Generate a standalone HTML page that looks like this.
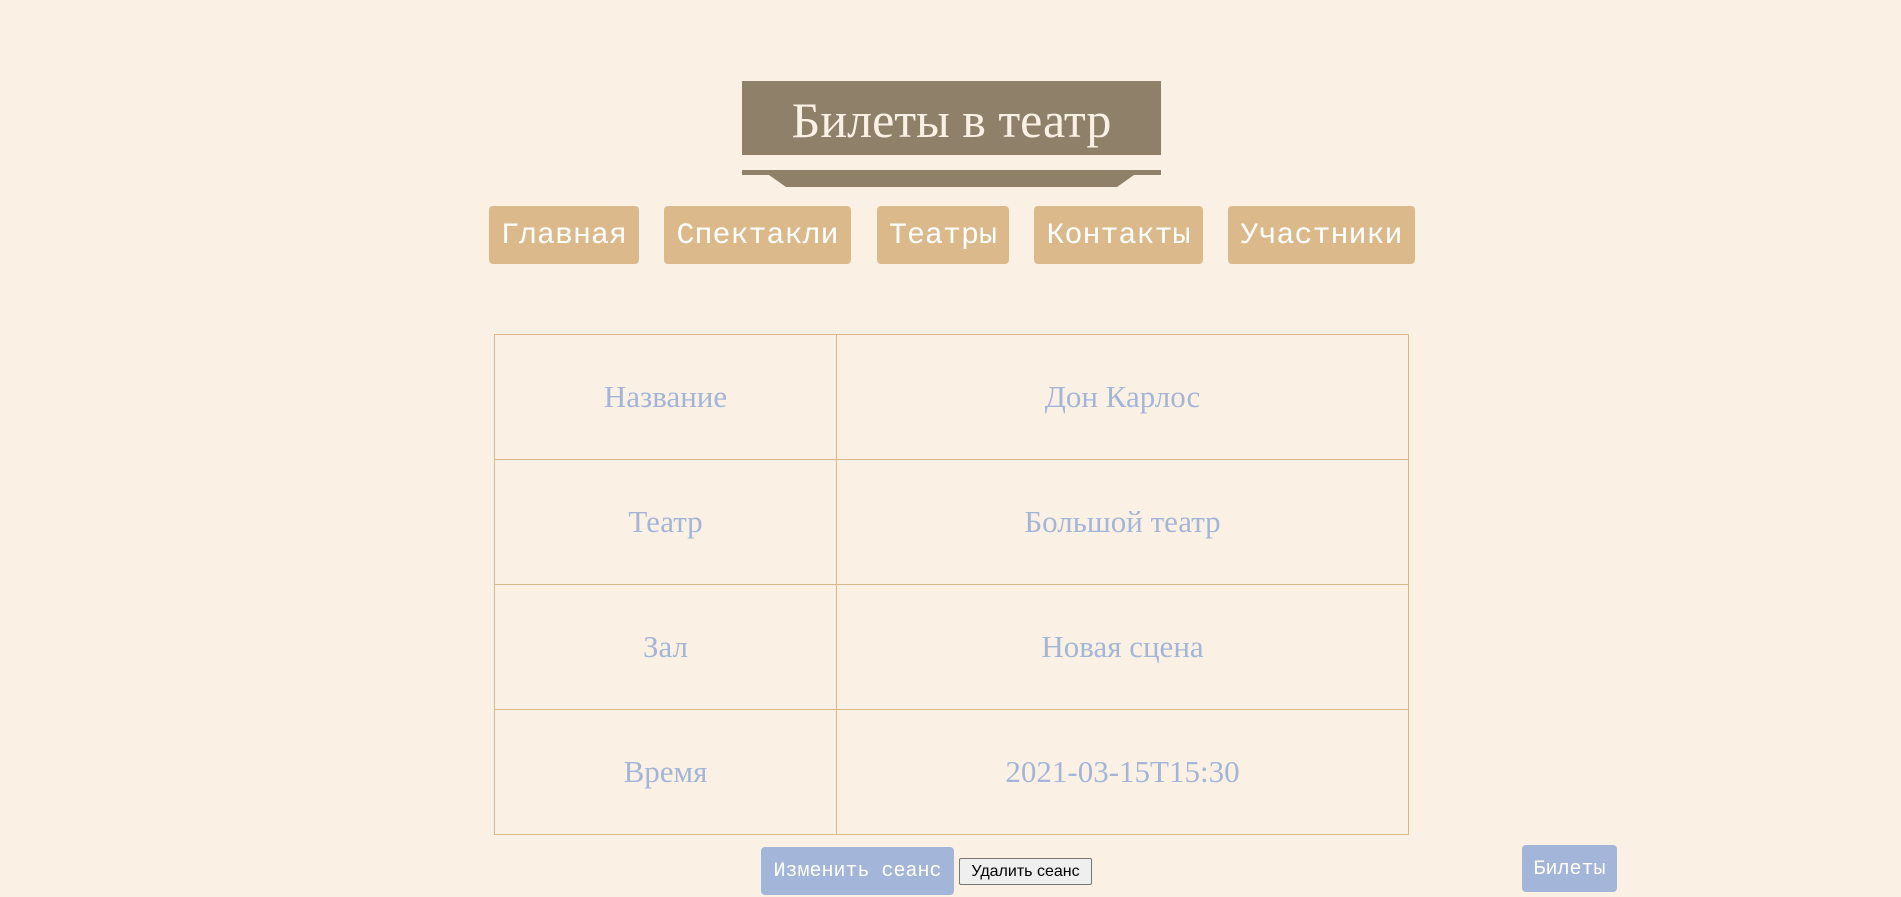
<!DOCTYPE html>
<html><head><meta charset="utf-8"><style>
body{margin:0;width:1901px;height:895px;background:#faf1e4;position:relative;overflow:hidden;font-family:"Liberation Sans",sans-serif}
.a{position:absolute;box-sizing:border-box}
.title{left:742px;top:81px;width:419px;height:74px;background:#8f806a;color:#faf1e4;font-family:"Liberation Serif",serif;font-size:50px;text-align:center;line-height:78px}
.nav{top:206px;height:58px;background:#dbb98a;border-radius:4px;color:#fff;font-family:"Liberation Mono",monospace;font-size:30px;text-align:center;line-height:60px}
td{border:1px solid #dbb98a;text-align:center;color:#a4b5d8;font-family:"Liberation Serif",serif;font-size:31px;height:124px;padding:0}
table{border-collapse:collapse}
.btn{background:#a3b5d8;color:#fff;font-family:"Liberation Mono",monospace;font-size:20px;text-align:center;border-radius:4px}
</style></head><body>
<div class="a title">Билеты в театр</div>
<div class="a" style="left:742px;top:170px;width:419px;height:5px;background:#8f806a"></div>
<svg class="a" style="left:742px;top:175px" width="419" height="12"><polygon points="27,0 392,0 375,12 44,12" fill="#8f806a"/></svg>
<div class="a nav" style="left:489px;width:150px">Главная</div>
<div class="a nav" style="left:664px;width:187px">Спектакли</div>
<div class="a nav" style="left:877px;width:132px">Театры</div>
<div class="a nav" style="left:1034px;width:169px">Контакты</div>
<div class="a nav" style="left:1228px;width:187px">Участники</div>
<table class="a" style="left:494px;top:334px;width:915px">
<tr><td style="width:341px">Название</td><td>Дон Карлос</td></tr>
<tr><td>Театр</td><td>Большой театр</td></tr>
<tr><td>Зал</td><td>Новая сцена</td></tr>
<tr><td>Время</td><td>2021-03-15T15:30</td></tr>
</table>
<div class="a btn" style="left:761px;top:847px;width:193px;height:48px;line-height:50px">Изменить сеанс</div>
<div class="a" style="left:959px;top:858px;width:133px;height:27px;border:1px solid #767676;border-radius:2px;background:#efefef;font-size:16px;line-height:25px;text-align:center;color:#000">Удалить сеанс</div>
<div class="a btn" style="left:1522px;top:845px;width:95px;height:47px;line-height:49px">Билеты</div>
</body></html>
